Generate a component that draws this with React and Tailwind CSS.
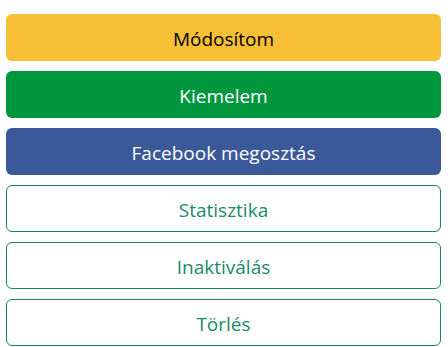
export default function App() {
  const solid = [
    { label: "Módosítom", cls: "bg-[#f7bf35] text-black" },
    { label: "Kiemelem", cls: "bg-[#00963e] text-white" },
    { label: "Facebook megosztás", cls: "bg-[#3b5998] text-white" },
  ]
  const outline = ["Statisztika", "Inaktiválás", "Törlés"]

  return (
    <div className="min-h-screen bg-white px-[6px] pt-[14px] font-['Open_Sans',sans-serif]">
      <div className="flex flex-col gap-[10px] w-[435px]">
        {solid.map((b) => (
          <button
            key={b.label}
            className={`h-[47px] w-full rounded-[6px] pt-[4px] text-[19px] flex items-center justify-center ${b.cls}`}
          >
            {b.label}
          </button>
        ))}
        {outline.map((t) => (
          <button
            key={t}
            className="h-[47px] w-full rounded-[6px] pt-[4px] border border-[#198754] bg-white text-[#198a6c] text-[19px] flex items-center justify-center"
          >
            {t}
          </button>
        ))}
      </div>
    </div>
  )
}
